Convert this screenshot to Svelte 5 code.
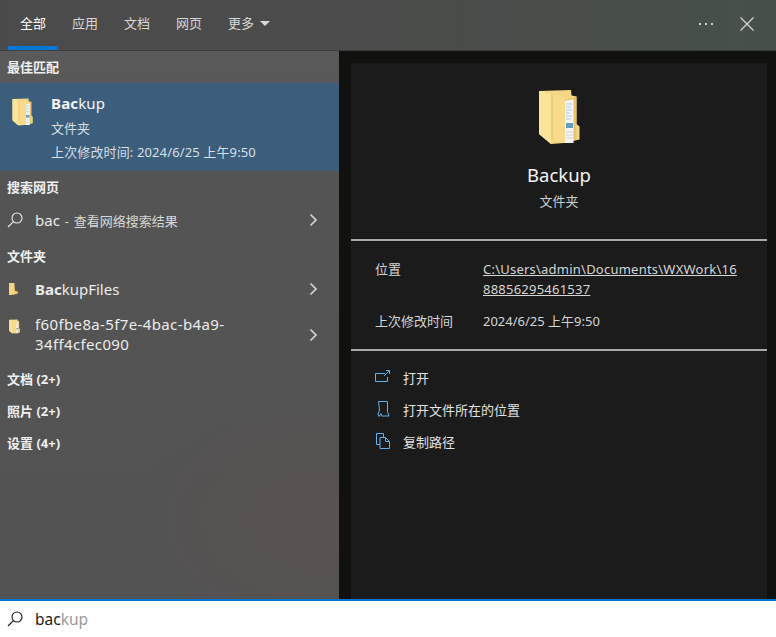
<script>
  const tabs = ['全部', '应用', '文档', '网页'];
  const collapsed = ['文档 (2+)', '照片 (2+)', '设置 (4+)'];
</script>

{#snippet folder(cls)}
  <svg class={cls} viewBox="0 0 42 56" aria-hidden="true">
    <path d="M1 2 L33 1 L33.5 6.500 L38.500 7.500 L38.500 35 L41.500 37.500 L41.500 50.500 L26 54 L13 55 L1 45Z" fill="#f5d885"/>
    <path d="M27 11 L38.500 7.500 L38.500 50 L27 54Z" fill="#e8c36a"/>
    <path d="M27 12 L35.500 10 L35.500 54 L27 54Z" fill="#f4f4f4"/>
    <path d="M28 15h6M28 18h5M28 21h6M28 24h4M28 27h6M28 30h5" stroke="#a9cde8" stroke-width="1"/>
    <path d="M28 34h7v5h-7z" fill="#5f9cc8"/>
    <path d="M28 43h7M28 46h7M28 49h7" stroke="#d4d4d4" stroke-width="1"/>
    <path d="M1 2 L13 5 L27 8 L27 54 L13 50 L13 55 L1 45Z" fill="#fbe39b"/>
    <path d="M13 5 L27 8 L27 54 L13 50Z" fill="#f7da8a"/>
    <path d="M13 5 L15 5.500 L15 50.600 L13 50Z" fill="#edcb75"/>
  </svg>
{/snippet}

{#snippet lens()}
  <svg class="lens" viewBox="0 0 16 16" aria-hidden="true">
    <circle cx="10" cy="6" r="5" fill="none" stroke="currentColor" stroke-width="1.100"/>
    <path d="M6.400 9.600 L1 15" stroke="currentColor" stroke-width="1.200" fill="none"/>
  </svg>
{/snippet}

{#snippet chevron(cls = '')}
  <svg class="chev {cls}" viewBox="0 0 9 14" aria-hidden="true">
    <path d="M1.500 1.500 L7 7 L1.500 12.500" fill="none" stroke="currentColor" stroke-width="1.700"/>
  </svg>
{/snippet}

<div class="shell">
  <header class="top">
    <nav class="tabs">
      {#each tabs as tab, i}
        <span class="tab" class:active={i === 0}>{tab}</span>
      {/each}
      <span class="tab more-tab">更多<i class="caret"></i></span>
    </nav>
    <div class="actions">
      <span class="dots"><i></i><i></i><i></i></span>
      <svg class="close" viewBox="0 0 14 14" aria-hidden="true">
        <path d="M0.500 0.500 L13.500 13.500 M13.500 0.500 L0.500 13.500" stroke="currentColor" stroke-width="1.200"/>
      </svg>
    </div>
  </header>

  <main class="body">
    <section class="left">
      <h3 class="head first">最佳匹配</h3>
      <div class="best">
        {@render folder('f-mid')}
        <div class="best-text">
          <div class="best-name"><b>Bac</b>kup</div>
          <div>文件夹</div>
          <div class="stamp">上次修改时间: 2024/6/25 上午9:50</div>
        </div>
      </div>

      <h3 class="head web">搜索网页</h3>
      <div class="row r-web">
        <span class="ico">{@render lens()}</span>
        <span class="label">bac<small>&nbsp;- 查看网络搜索结果</small></span>
        {@render chevron()}
      </div>

      <h3 class="head files">文件夹</h3>
      <div class="row r-one">
        <span class="ico"><span class="mini"></span></span>
        <span class="label"><b>Bac</b>kupFiles</span>
        {@render chevron()}
      </div>
      <div class="row r-two">
        <span class="ico">{@render folder('f-small')}</span>
        <span class="label wrap">f60fbe8a-5f7e-4bac-b4a9-<br />34ff4cfec090</span>
        {@render chevron('chev-low')}
      </div>

      <div class="more">
        {#each collapsed as c}
          <h3 class="head">{c}</h3>
        {/each}
      </div>
    </section>

    <section class="right">
      <div class="card">
        <div class="hero">
          {@render folder('f-big')}
          <div class="hero-name">Backup</div>
          <div class="hero-type">文件夹</div>
        </div>
        <div class="props">
          <div class="prop">
            <span class="key">位置</span>
            <span class="link">C:\Users\admin\Documents\WXWork\16<br />88856295461537</span>
          </div>
          <div class="prop">
            <span class="key">上次修改时间</span>
            <span>2024/6/25 上午9:50</span>
          </div>
        </div>
        <div class="cmds">
          <div class="cmd">
            <svg viewBox="0 0 16 16" aria-hidden="true"><path d="M10 4.500H.5V12.500H12.500V8M9 7 L14.500 1.500M11 1.500H14.500V5" fill="none" stroke="currentColor"/></svg>
            打开
          </div>
          <div class="cmd">
            <svg viewBox="0 0 16 16" aria-hidden="true"><path d="M3.500 .5H12.500V10.500L14 15H6.500L6 12.500L4 15.500L3 13L4.500 9Z" fill="none" stroke="currentColor"/></svg>
            打开文件所在的位置
          </div>
          <div class="cmd">
            <svg viewBox="0 0 16 16" aria-hidden="true"><path d="M5 11.500H1.500V.5H8.500V4M5 4.500H10.500L14.500 8.500V15.500H5ZM10.500 4.500V8.500H14.500" fill="none" stroke="currentColor"/></svg>
            复制路径
          </div>
        </div>
      </div>
    </section>
  </main>

  <footer class="search">
    <span class="ico">{@render lens()}</span>
    <span class="query">bac<span class="ghost">kup</span></span>
  </footer>
</div>

<style>
  :global(body) {
    margin: 0;
    background: #535353;
  }
  .shell {
    width: 776px;
    height: 637px;
    display: flex;
    flex-direction: column;
    overflow: hidden;
    font-family: "Noto Sans", "Noto Sans CJK SC", sans-serif;
    font-size: 14px;
    color: #f2f2f2;
  }
  .top {
    height: 51px;
    flex: none;
    display: flex;
    justify-content: space-between;
    background: linear-gradient(90deg, #4b4b4b 0%, #4a4c4a 60%, #465049 100%);
    border-bottom: 1px solid #3e3e3e;
    box-sizing: border-box;
  }
  .tabs {
    display: flex;
    padding-left: 8px;
  }
  .tab {
    width: 50px;
    margin-right: 2px;
    height: 50px;
    box-sizing: border-box;
    padding-top: 14px;
    line-height: 19px;
    text-align: center;
    font-size: 13px;
    color: #d8d8d8;
    white-space: nowrap;
  }
  .more-tab {
    width: auto;
    text-align: left;
    margin-left: 6px;
    padding-left: 6px;
  }
  .tab.active {
    color: #fff;
    border-bottom: 4px solid #0078d7;
  }
  .caret {
    display: inline-block;
    margin-left: 6px;
    vertical-align: 2px;
    border-left: 5.5px solid transparent;
    border-right: 5.5px solid transparent;
    border-top: 5px solid #d8d8d8;
  }
  .actions {
    display: flex;
    align-items: center;
    gap: 27px;
    padding-right: 22px;
    padding-bottom: 3px;
    color: #d8d8d8;
  }
  .dots {
    display: flex;
    gap: 4px;
  }
  .dots i {
    width: 2px;
    height: 2px;
    background: #cfcfcf;
  }
  .close {
    width: 14px;
    height: 14px;
    display: block;
  }
  .body {
    flex: 1;
    min-height: 0;
    display: flex;
  }
  .left {
    width: 339px;
    flex: none;
    background:
      radial-gradient(ellipse 190px 130px at 320px 470px, #595250 0, rgba(89, 82, 80, 0) 100%),
      linear-gradient(180deg, #5a5a5a 0, #545454 120px, #535353 100%);
  }
  .head {
    margin: 0;
    font-size: 13px;
    line-height: 18px;
    font-weight: 700;
    padding-left: 7px;
    color: #f0f0f0;
  }
  .head.first {
    padding-top: 7px;
    padding-bottom: 7px;
  }
  .best {
    height: 88px;
    background: #3b5e7d;
    display: flex;
    color: #d9dfe5;
  }
  .f-mid {
    width: 21px;
    height: 28px;
    margin: 15px 0 0 12px;
    flex: none;
  }
  .best-text {
    margin-left: 18px;
    padding-top: 9px;
    line-height: 24px;
    font-size: 13px;
  }
  .stamp {
    letter-spacing: 0.13px;
  }
  .best-name {
    font-size: 15px;
    color: #f4f4f4;
    line-height: 23px;
    letter-spacing: 0.15px;
    margin-bottom: 1px;
  }
  .head.web {
    padding-top: 7px;
    padding-bottom: 7px;
  }
  .row {
    display: flex;
    align-items: center;
    height: 34px;
    color: #ececec;
    font-size: 15px;
  }
  .ico {
    width: 35px;
    flex: none;
    display: flex;
    align-items: center;
    padding-left: 7px;
    box-sizing: border-box;
  }
  .lens {
    width: 16px;
    height: 16px;
    display: block;
    color: currentColor;
  }
  .label {
    flex: 1;
  }
  .label small {
    font-size: 13px;
    color: #d8d8d8;
    word-spacing: 1.5px;
  }
  .wrap {
    line-height: 20px;
    letter-spacing: 0.37px;
  }
  .chev {
    width: 9px;
    height: 14px;
    margin-right: 21px;
    color: #d4d4d4;
    flex: none;
  }
  .chev-low {
    margin-top: 2px;
  }
  .head.files {
    padding-top: 10px;
    padding-bottom: 7px;
  }
  .r-one {
    height: 34px;
  }
  .r-two {
    height: 56px;
  }
  .mini {
    width: 9px;
    height: 12px;
    margin-left: 2px;
    background: linear-gradient(90deg, #f5d67f 60%, #d9b257);
    clip-path: polygon(0 0, 60% 0, 65% 65%, 100% 70%, 100% 90%, 20% 100%, 0 100%);
  }
  .f-small {
    width: 11px;
    height: 15px;
    margin-left: 2px;
    margin-top: -16px;
  }
  .more {
    padding-top: 8px;
    display: flex;
    flex-direction: column;
    gap: 14px;
  }
  .right {
    flex: 1;
    background: #111110;
    padding: 12px 9px 0 12px;
    display: flex;
  }
  .card {
    flex: 1;
    background: #1b1b1b;
  }
  .hero {
    height: 178px;
    box-sizing: border-box;
    padding-top: 26px;
    text-align: center;
    border-bottom: 2px solid #a8a8a8;
    display: flex;
    flex-direction: column;
    align-items: center;
  }
  .f-big {
    width: 42px;
    height: 56px;
    flex: none;
  }
  .hero-name {
    font-size: 18.500px;
    line-height: 28px;
    margin-top: 16px;
    color: #f4f4f4;
  }
  .hero-type {
    font-size: 13px;
    line-height: 18px;
    margin-top: 3px;
    color: #cfcfcf;
  }
  .props {
    height: 110px;
    box-sizing: border-box;
    padding: 18px 24px 0;
    border-bottom: 2px solid #a8a8a8;
    font-size: 13px;
    line-height: 20px;
    color: #d6d6d6;
  }
  .prop {
    display: flex;
    margin-bottom: 12px;
  }
  .key {
    width: 108px;
    flex: none;
  }
  .link {
    text-decoration: underline;
    letter-spacing: 0.23px;
  }
  .cmds {
    padding: 10px 0 0 24px;
  }
  .cmd {
    height: 32px;
    display: flex;
    align-items: center;
    gap: 12px;
    font-size: 13px;
    color: #e2e2e2;
  }
  .cmd svg {
    width: 16px;
    height: 16px;
    color: #63b1ea;
    flex: none;
  }
  .search {
    flex: none;
    height: 38px;
    box-sizing: border-box;
    background: #fff;
    border-top: 2px solid #0078d7;
    display: flex;
    align-items: center;
    color: #1a1a1a;
  }
  .query {
    font-size: 15.500px;
  }
  .ghost {
    color: #9a9a9a;
  }
  b {
    font-weight: 700;
  }
</style>
